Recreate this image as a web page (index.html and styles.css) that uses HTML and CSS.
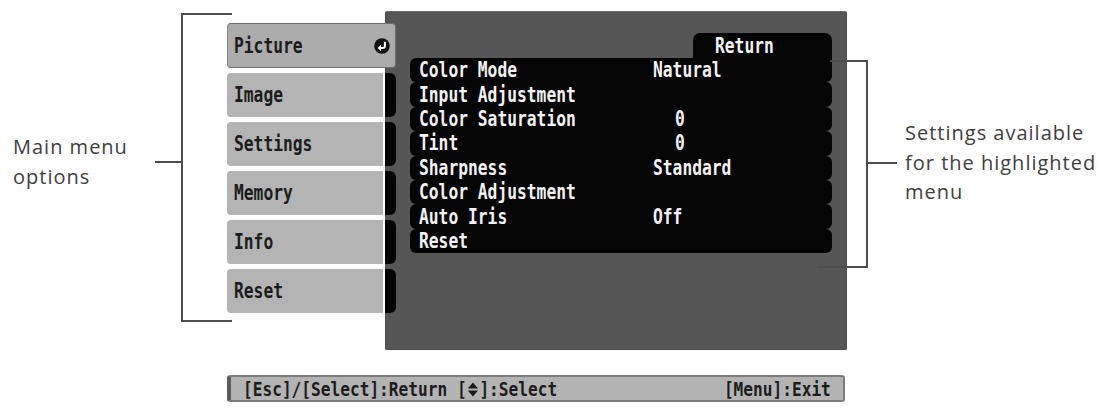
FILE: index.html
```html
<!DOCTYPE html>
<html lang="en">
<head>
<meta charset="utf-8">
<title>Projector menu</title>
<link rel="stylesheet" href="styles.css">
</head>
<body>
<div class="figure">
  <div class="callout-left">
    <div class="label label-left">Main menu<br>options</div>
    <div class="tick tick-left"></div>
    <div class="bracket-left"></div>
  </div>

  <div class="osd">
    <div class="screen">
      <div class="tabs">
        <div class="tab tab-active">
          <div class="tab-face"><span class="osd-t">Picture</span>
            <svg class="tab-icon" width="16" height="16" viewBox="0 0 15 15"><circle cx="7.5" cy="7.5" r="7.3" fill="#111"/><path d="M10.2 3.6 V7.6 Q10.2 9.4 8.4 9.4 H6.2" fill="none" stroke="#fff" stroke-width="1.9"/><path d="M6.6 6.4 L3.4 9.4 L6.6 12.4 Z" fill="#fff"/></svg>
          </div>
        </div>
        <div class="tab"><div class="tab-face"><span class="osd-t">Image</span></div><div class="tab-link"></div></div>
        <div class="tab"><div class="tab-face"><span class="osd-t">Settings</span></div><div class="tab-link"></div></div>
        <div class="tab"><div class="tab-face"><span class="osd-t">Memory</span></div><div class="tab-link"></div></div>
        <div class="tab"><div class="tab-face"><span class="osd-t">Info</span></div><div class="tab-link"></div></div>
        <div class="tab"><div class="tab-face"><span class="osd-t">Reset</span></div><div class="tab-link"></div></div>
      </div>
      <div class="panel">
        <div class="return-row"><div class="return-tab"><span class="osd-t">Return</span></div></div>
        <div class="list">
          <div class="row row-first"><span class="name"><span class="osd-t">Color Mode</span></span><span class="val"><span class="osd-t">Natural</span></span></div>
          <div class="row"><span class="name"><span class="osd-t">Input Adjustment</span></span><span class="val"></span></div>
          <div class="row"><span class="name"><span class="osd-t">Color Saturation</span></span><span class="val val-num"><span class="osd-t">0</span></span></div>
          <div class="row"><span class="name"><span class="osd-t">Tint</span></span><span class="val val-num"><span class="osd-t">0</span></span></div>
          <div class="row"><span class="name"><span class="osd-t">Sharpness</span></span><span class="val"><span class="osd-t">Standard</span></span></div>
          <div class="row"><span class="name"><span class="osd-t">Color Adjustment</span></span><span class="val"></span></div>
          <div class="row"><span class="name"><span class="osd-t">Auto Iris</span></span><span class="val"><span class="osd-t">Off</span></span></div>
          <div class="row"><span class="name"><span class="osd-t">Reset</span></span><span class="val"></span></div>
        </div>
      </div>
    </div>
    <div class="footer">
      <span class="osd-t foot-t">[Esc]/[Select]:Return [<svg class="updown" width="13" height="15" viewBox="0 0 13 15"><path d="M6.5 0.5 L12.5 6.6 H0.5 Z M0.5 8.4 H12.5 L6.5 14.5 Z" fill="#1a1a1a"/></svg>]:Select</span>
      <span class="osd-t foot-t">[Menu]:Exit</span>
    </div>
  </div>

  <div class="callout-right">
    <div class="bracket-right"><div class="arm-top"></div></div>
    <div class="tick tick-right"></div>
    <div class="label label-right">Settings available<br>for the highlighted<br>menu</div>
  </div>
</div>
</body>
</html>
```
FILE: styles.css
```css
html, body {
  margin: 0;
  padding: 0;
  background: #fff;
}
body {
  width: 1101px;
  height: 409px;
  overflow: hidden;
}
.figure {
  display: flex;
  align-items: flex-start;
  height: 409px;
}

/* callouts */
.label {
  font-family: "Open Sans", "Lato", sans-serif;
  font-weight: 400;
  font-size: 20px;
  letter-spacing: 1px;
  color: #3e3e3e;
  white-space: nowrap;
}
.callout-left {
  display: flex;
  align-items: flex-start;
  width: 227px;
  flex: none;
}
.label-left {
  width: 142px;
  padding-left: 13px;
  margin-top: 132px;
  line-height: 30px;
}
.tick {
  height: 0;
  border-top: 2px solid #4d4d4d;
  flex: none;
}
.tick-left {
  width: 27px;
  margin-top: 161px;
}
.bracket-left {
  flex: none;
  width: 49px;
  height: 305px;
  margin-top: 13px;
  margin-left: -1px;
  margin-right: -5px;
  border: 2px solid #4d4d4d;
  border-right: none;
}
.callout-right {
  display: flex;
  align-items: flex-start;
  flex: none;
  margin-left: -30px;
  position: relative;
  z-index: 3;
}
.bracket-right {
  flex: none;
  width: 49px;
  height: 206px;
  margin-top: 60px;
  border-right: 2px solid #4d4d4d;
  border-bottom: 2px solid #4d4d4d;
  display: flex;
  flex-direction: column;
}
.arm-top {
  margin-left: 13px;
  border-top: 2px solid #4d4d4d;
}
.tick-right {
  width: 29px;
  margin-top: 162px;
}
.label-right {
  padding-left: 8px;
  margin-top: 118px;
  line-height: 29.5px;
}

/* OSD */
.osd {
  flex: none;
  width: 620px;
  display: flex;
  flex-direction: column;
}
.osd-t {
  display: inline-block;
  font-family: "DejaVu Sans Mono", "Liberation Mono", monospace;
  font-weight: bold;
  font-size: 22px;
  line-height: 24px;
  white-space: nowrap;
  transform: scaleX(0.74);
  transform-origin: 0 50%;
}
.screen {
  display: flex;
  align-items: flex-start;
  margin-top: 11px;
}
.tabs {
  flex: none;
  width: 158px;
  padding-top: 12px;
  display: flex;
  flex-direction: column;
  align-items: flex-start;
  gap: 5px;
  position: relative;
  z-index: 2;
}
.tab {
  display: flex;
  width: 169px;
  height: 44px;
  flex: none;
}
.tab-face {
  width: 156px;
  height: 44px;
  box-sizing: border-box;
  background: #b4b4b4;
  border-radius: 4px 0 0 4px;
  padding-left: 7px;
  display: flex;
  align-items: center;
  color: #1c1c1c;
}
.tab-link {
  width: 11px;
  margin-left: 2px;
  height: 44px;
  background: #050505;
  border-radius: 0 6px 6px 0;
}
.tab-active {
  height: 45px;
}
.tab-active .tab-face {
  width: 169px;
  height: 45px;
  background: #acacac;
  border: 1px solid #6f6f6f;
  border-left-color: #8a8a8a;
  border-radius: 4px;
  padding-left: 6px;
  justify-content: space-between;
  padding-right: 5px;
}
.tab-icon {
  flex: none;
}
.panel {
  flex: none;
  width: 462px;
  height: 339px;
  box-sizing: border-box;
  background: #565656;
  border: 1px solid #4a4a4a;
  border-top-color: #6a6a6a;
  border-radius: 2px;
  padding: 21px 14px 0 24px;
  color: #f2f2f2;
}
.return-row {
  display: flex;
  justify-content: flex-end;
}
.return-tab {
  width: 139px;
  height: 25px;
  box-sizing: border-box;
  background: #050505;
  border-radius: 7px 7px 0 0;
  padding-left: 22px;
  display: flex;
  align-items: center;
}
.list {
  display: flex;
  flex-direction: column;
}
.row {
  display: flex;
  align-items: center;
  height: 24.4px;
  background: #050505;
  border-radius: 6px;
  padding-left: 9px;
}
.row-first {
  border-top-right-radius: 0;
}
.name {
  width: 234px;
  flex: none;
}
.val-num {
  padding-left: 22px;
}
.footer {
  margin-top: 25px;
  width: 618px;
  height: 27px;
  box-sizing: border-box;
  background: #b3b3b3;
  border: 2px solid #7c7c7c;
  border-left: 4px solid #5a5a5a;
  border-radius: 3px;
  display: flex;
  align-items: center;
  justify-content: space-between;
  padding: 0 12px 0 12px;
  color: #1c1c1c;
}
.foot-t {
  font-size: 19px;
  transform: scaleX(0.85);
}
.footer .foot-t:last-child {
  transform-origin: 100% 50%;
}
.updown {
  vertical-align: -1px;
  margin: 0 1px;
}
```
